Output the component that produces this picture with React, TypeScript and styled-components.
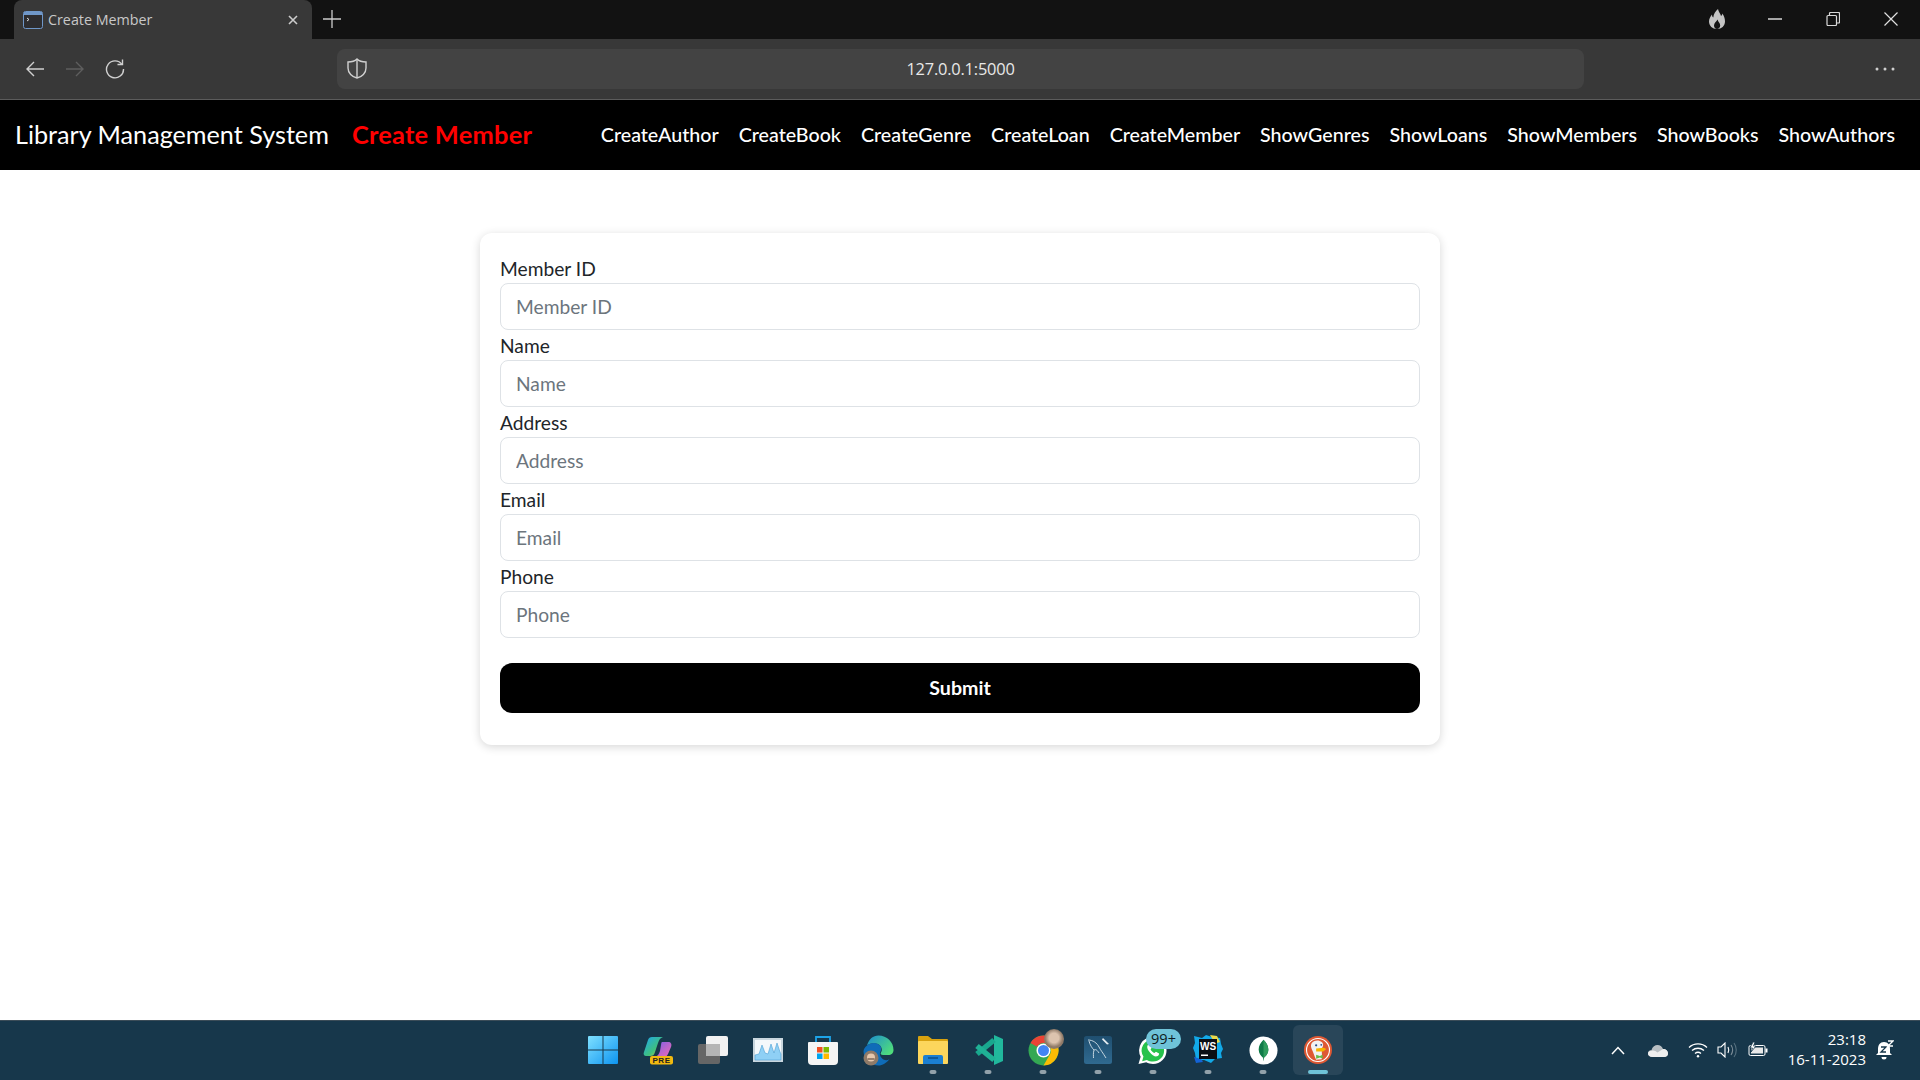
import React from 'react'
import styled, { createGlobalStyle } from 'styled-components'

const GlobalStyle = createGlobalStyle`
	html, body {
		margin: 0;
		padding: 0;
		background: #fff;
	}
	* {
		box-sizing: border-box;
	}
`

const Page = styled.div`
	width: 1920px;
	height: 1080px;
	display: flex;
	flex-direction: column;
	overflow: hidden;
	font-family: 'Lato', 'Liberation Sans', sans-serif;
`

/* browser chrome */
const TabStrip = styled.div`
	height: 39px;
	background: #121212;
	display: flex;
	padding-left: 14px;
`

const Tab = styled.div`
	width: 298px;
	background: #383838;
	border-radius: 8px 8px 0 0;
	display: flex;
	align-items: center;
	padding: 0 13px 0 9px;
	color: #c8c8c8;
	font-family: 'Open Sans', sans-serif;
	font-size: 14.3px;
`

const TabTitle = styled.span`
	flex: 1;
	margin-left: 5px;
`

const NewTab = styled.div`
	width: 40px;
	padding-bottom: 1px;
	display: flex;
	align-items: center;
	justify-content: center;
`

const WindowControls = styled.div`
	margin-left: auto;
	display: flex;
`

const WindowButton = styled.div`
	width: 58px;
	padding-bottom: 1px;
	display: flex;
	align-items: center;
	justify-content: center;
`

const Toolbar = styled.div`
	height: 61px;
	background: #383838;
	border-bottom: 1px solid #5c5c5c;
	display: grid;
	grid-template-columns: 337px 1fr 336px;
	align-items: center;
`

const NavButtons = styled.div`
	display: flex;
	padding-left: 15px;
`

const NavButton = styled.div`
	width: 40px;
	height: 40px;
	display: flex;
	align-items: center;
	justify-content: center;
`

const AddressBar = styled.div`
	height: 40px;
	margin-top: -1px;
	background: #434343;
	border-radius: 8px;
	display: grid;
	grid-template-columns: 1fr auto 1fr;
	align-items: center;
	color: #e8e8e8;
	font-family: 'Open Sans', sans-serif;
	font-size: 16.4px;
	letter-spacing: -0.2px;
`

const ShieldSlot = styled.div`
	display: flex;
	padding-left: 10px;
`

const MoreButton = styled.div`
	display: flex;
	justify-content: flex-end;
	padding-right: 25px;
`

/* site navbar */
const Navbar = styled.nav`
	height: 70px;
	background: #000;
	display: flex;
	align-items: center;
	padding: 0 25px 2px 15px;
`

const Brand = styled.div`
	color: #fff;
	font-size: 25.2px;
	white-space: nowrap;
`

const PageTitle = styled.div`
	color: #f00;
	font-size: 25.4px;
	font-weight: 700;
	letter-spacing: 0.25px;
	margin-left: 23px;
	white-space: nowrap;
`

const NavLinks = styled.div`
	margin-left: auto;
	display: flex;
	gap: 20px;
`

const NavLink = styled.a`
	color: #fff;
	font-size: 19.65px;
	font-weight: 500;
	white-space: nowrap;
`

/* form */
const Main = styled.main`
	flex: 1;
	padding-top: 63px;
	background: #fff;
`

const Card = styled.form`
	width: 960px;
	height: 512px;
	margin: 0 auto;
	padding: 20px 20px 0;
	background: #fff;
	border-radius: 12px;
	box-shadow: 0 2px 10px rgba(0, 0, 0, 0.16);
`

const Label = styled.label`
	display: block;
	height: 30px;
	line-height: 32px;
	color: #212529;
	font-size: 19.2px;
`

const Input = styled.input`
	display: block;
	width: 100%;
	height: 47px;
	padding: 0 15px 1px;
	border: 1px solid #dee2e6;
	border-radius: 8px;
	background: #fff;
	font-family: inherit;
	font-size: 19.2px;
	&::placeholder {
		color: #6c757d;
		opacity: 1;
	}
`

const Submit = styled.button`
	display: block;
	width: 100%;
	height: 50px;
	margin-top: 25px;
	padding: 0 0 1px;
	border: 0;
	border-radius: 12px;
	background: #000;
	color: #fff;
	font-family: inherit;
	font-size: 19.6px;
	font-weight: 700;
`

/* taskbar */
const Taskbar = styled.footer`
	height: 60px;
	padding-bottom: 1px;
	background: #17374b;
	border-top: 1px solid #3b4c58;
	display: grid;
	grid-template-columns: 1fr auto 1fr;
	align-items: center;
`

const TaskIcons = styled.div`
	grid-column: 2;
	display: flex;
	gap: 5px;
	margin-left: 1px;
`

const TaskSlot = styled.div<{ $active?: boolean }>`
	position: relative;
	width: 50px;
	height: 50px;
	display: flex;
	align-items: center;
	justify-content: center;
	border-radius: 6px;
	background: ${p => (p.$active ? '#294659' : 'transparent')};
`

const RunDot = styled.span<{ $active?: boolean }>`
	position: absolute;
	left: 50%;
	bottom: 1px;
	transform: translateX(-50%);
	width: ${p => (p.$active ? '20px' : '7px')};
	height: 4px;
	border-radius: 2px;
	background: ${p => (p.$active ? '#6fc3d8' : '#92a1aa')};
`

const Badge = styled.span`
	position: absolute;
	top: 4px;
	left: 18px;
	width: 35px;
	height: 20px;
	border-radius: 10px;
	background: #6fc3d8;
	color: #0d1a20;
	font-family: 'Open Sans', sans-serif;
	font-size: 14.5px;
	line-height: 20px;
	text-align: center;
`

const MiniAvatar = styled.span`
	position: absolute;
	top: 4px;
	left: 26px;
	width: 20px;
	height: 20px;
	border-radius: 50%;
	background: radial-gradient(circle at 50% 45%, #dcc3ae 0 32%, #8f7a68 60%);
`

const Tray = styled.div`
	display: flex;
	align-items: center;
	justify-content: flex-end;
	padding-right: 18px;
`

const TrayIcon = styled.div<{ $width: number }>`
	width: ${p => p.$width}px;
	display: flex;
	justify-content: center;
`

const Clock = styled.div`
	margin: -2px 2px 0 2px;
	width: 90px;
	text-align: right;
	color: #fff;
	font-family: 'Open Sans', sans-serif;
	font-size: 15px;
	line-height: 20px;
`

/* icons */
const TerminalIcon = () => (
	<svg width="20" height="18" viewBox="0 0 20 18">
		<rect x=".5" y=".5" width="19" height="17" rx="2" fill="#2d2d30" stroke="#6f97c9" />
		<rect x="1" y="1" width="18" height="3" fill="#6f97c9" />
		<path d="M4 7l2 1.500L4 10" stroke="#ddd" fill="none" />
	</svg>
)

const CloseSmall = () => (
	<svg width="12" height="12" viewBox="0 0 12 12">
		<path d="M2 2l8 8M10 2l-8 8" stroke="#ccc" strokeWidth="1.600" />
	</svg>
)

const Plus = () => (
	<svg width="18" height="18" viewBox="0 0 18 18">
		<path d="M9 0v18M0 9h18" stroke="#ccc" strokeWidth="1.300" />
	</svg>
)

const Flame = () => (
	<svg width="16" height="20" viewBox="0 0 16 20">
		<path d="M9 0c.5 3 2.500 4.500 3 7 .8-.5 1.300-1.500 1.300-2.500C15 6.500 16 9.500 16 12.500 16 17 12.500 20 8 20S0 17 0 12.500C0 9.500 1.500 7.500 3 5.500c0 1.500.5 2.500 1.300 3C4.500 5 6.500 2 9 0z" fill="#c4c4c4" />
		<path d="M8.500 10.500C7.500 12.500 5 14 5 16.500 5 18.500 6.500 20 8 20s3.200-1.300 3.200-3.500c0-2.500-2-3.500-2.700-6z" fill="#121212" />
	</svg>
)

const Minimize = () => (
	<svg width="14" height="14" viewBox="0 0 14 14">
		<path d="M0 7h14" stroke="#d8d8d8" strokeWidth="1.500" />
	</svg>
)

const Restore = () => (
	<svg width="14" height="14" viewBox="0 0 14 14" fill="none" stroke="#d8d8d8" strokeWidth="1.200">
		<rect x="1" y="3.500" width="9.500" height="10" rx="1" />
		<path d="M3.500 3.500V1.500a1 1 0 0 1 1-1H12.500a1 1 0 0 1 1 1V10a1 1 0 0 1-1 1h-2" />
	</svg>
)

const CloseWindow = () => (
	<svg width="14" height="14" viewBox="0 0 14 14">
		<path d="M.5.5l13 13M13.500.5l-13 13" stroke="#e0e0e0" strokeWidth="1.200" />
	</svg>
)

const Arrow = ({ flip, color }: { flip?: boolean; color: string }) => (
	<svg width="20" height="18" viewBox="0 0 20 18" style={flip ? { transform: 'scaleX(-1)' } : undefined}>
		<path d="M19 9H2M9 2L2 9l7 7" stroke={color} strokeWidth="1.400" fill="none" />
	</svg>
)

const Reload = () => (
	<svg width="20" height="20" viewBox="0 0 20 20" fill="none" stroke="#d0d0d0" strokeWidth="1.400">
		<path d="M17 5.500A8.500 8.500 0 1 0 18.500 10" />
		<path d="M12.500 5.500H17.500V.5" />
	</svg>
)

const Shield = () => (
	<svg width="20" height="21" viewBox="0 0 20 21" fill="none" stroke="#d0d0d0" strokeWidth="1.400">
		<path d="M10 1c2 2 5 3 9 3v6c0 5-4 9-9 10C5 19 1 15 1 10V4c4 0 7-1 9-3z" />
		<path d="M10 1v19" />
	</svg>
)

const Dots = () => (
	<svg width="20" height="4" viewBox="0 0 20 4" fill="#d0d0d0">
		<circle cx="2" cy="2" r="1.500" />
		<circle cx="10" cy="2" r="1.500" />
		<circle cx="18" cy="2" r="1.500" />
	</svg>
)

const StartIcon = () => (
	<svg width="30" height="30" viewBox="0 0 30 30">
		<defs>
			<linearGradient id="st" x1="0" y1="0" x2="1" y2="1">
				<stop offset="0" stopColor="#7fe0ff" />
				<stop offset="1" stopColor="#0d94f0" />
			</linearGradient>
		</defs>
		<path d="M1 1h13.500v13.500H0V2a1 1 0 0 1 1-1zM15.500 1H29a1 1 0 0 1 1 1v12.500H15.500zM0 15.500h14.500V29H1a1 1 0 0 1-1-1zM15.500 15.500H30V28a1 1 0 0 1-1 1H15.500z" fill="url(#st)" />
	</svg>
)

const CopilotIcon = () => (
	<svg width="30" height="30" viewBox="0 0 30 30" fontFamily="'Liberation Sans', sans-serif">
		<defs>
			<linearGradient id="cp1" x1="0" y1="0" x2="1" y2="1">
				<stop offset="0" stopColor="#1ea6ef" />
				<stop offset=".6" stopColor="#3fc07f" />
				<stop offset="1" stopColor="#d8d23a" />
			</linearGradient>
			<linearGradient id="cp2" x1="0" y1="0" x2="1" y2="1">
				<stop offset="0" stopColor="#7b5fe6" />
				<stop offset="1" stopColor="#f26bb5" />
			</linearGradient>
		</defs>
		<path d="M9 2h11c-3 1-4 3-5 6l-3 9c-1 3-2 4-5 4H3c-2 0-3-2-2-4l4-12c.6-2 2-3 4-3z" fill="url(#cp1)" />
		<path d="M19 7h6c3 0 4 2 3 5l-3 7c-1 2-2 3-4 3h-9c3-1 4-3 5-6l1-6c.3-2 .5-3 1-3z" fill="url(#cp2)" />
		<rect x="7" y="21" width="23" height="8.500" rx="2" fill="#f2b90f" />
		<text x="18.500" y="28" fontSize="8" fontWeight="700" textAnchor="middle" letterSpacing=".6" fill="#222">PRE</text>
	</svg>
)

const TaskViewIcon = () => (
	<svg width="30" height="28" viewBox="0 0 30 28">
		<rect x="8" y="0" width="22" height="20" rx="2" fill="#f2f2f2" />
		<rect x="0" y="8" width="22" height="20" rx="2" fill="#666" />
		<rect x="8" y="8" width="14" height="12" fill="#b5b5b5" />
	</svg>
)

const TaskManagerIcon = () => (
	<svg width="30" height="24" viewBox="0 0 30 24">
		<rect x="0" y="0" width="30" height="24" fill="#c9d6de" />
		<rect x="2" y="2" width="26" height="20" fill="#f4f8fb" />
		<path d="M2 17l4-1 3-9 3 8 3 1 3-10 3 9 3-10 3 9 1 2v6H2z" fill="#8fd0f5" stroke="#4d9fd4" strokeWidth=".6" />
	</svg>
)

const StoreIcon = () => (
	<svg width="30" height="30" viewBox="0 0 30 30">
		<path d="M8 7V2h14v5" fill="none" stroke="#1da4e8" strokeWidth="1.800" />
		<path d="M1 7h28a1 1 0 0 1 1 1v18a4 4 0 0 1-4 4H4a4 4 0 0 1-4-4V8a1 1 0 0 1 1-1z" fill="#f5f5f5" />
		<rect x="9" y="12" width="5.500" height="5.500" fill="#f25022" />
		<rect x="15.500" y="12" width="5.500" height="5.500" fill="#7fba00" />
		<rect x="9" y="18.500" width="5.500" height="5.500" fill="#00a4ef" />
		<rect x="15.500" y="18.500" width="5.500" height="5.500" fill="#ffb900" />
	</svg>
)

const EdgeIcon = () => (
	<svg width="31" height="31" viewBox="0 0 31 31">
		<defs>
			<linearGradient id="ed" x1="0" y1="0" x2="1" y2=".7">
				<stop offset="0" stopColor="#1b8bd0" />
				<stop offset="1" stopColor="#4fdc7c" />
			</linearGradient>
		</defs>
		<path d="M15.500.5C24 .5 30.500 7 30.500 15c0 3-2 5-5.500 5h-5c-2 0-3-1-2-2.500 1.500-2 1-5-1-7-3-3-9-3-13 0C6 4 10 .5 15.500.5z" fill="url(#ed)" />
		<path d="M4 10.500c4-3.500 10-3.500 13 0 1.500 2 1.500 4 .5 6-1.500 3 0 6 3 8 2 1 4 1 6-.5-3 4-7 6.500-11 6.500-7 0-15-7-15-14 0-2.500 1.500-4.500 3.500-6z" fill="#0f6cb8" />
		<circle cx="8" cy="23" r="7.500" fill="#8f7a68" />
		<circle cx="8" cy="22.500" r="4" fill="#e6c8ae" />
		<path d="M4.500 24h7" stroke="#4a3a30" strokeWidth="1" />
	</svg>
)

const FolderIcon = () => (
	<svg width="30" height="28" viewBox="0 0 30 28">
		<path d="M1 0h9l4 3h15a1 1 0 0 1 1 1v4H0V1a1 1 0 0 1 1-1z" fill="#d8a20f" />
		<rect x="0" y="5" width="30" height="23" rx="1" fill="#fcd65c" />
		<path d="M5 28v-7a2 2 0 0 1 2-2h16a2 2 0 0 1 2 2v7z" fill="#1b7fd1" />
		<path d="M10 22h10" stroke="#0c4f8a" strokeWidth="1.500" />
	</svg>
)

const VSCodeIcon = () => (
	<svg width="30" height="30" viewBox="0 0 30 30">
		<path d="M21 0l9 4v22l-9 4z" fill="#21b89c" />
		<path d="M21 5L4 19" stroke="#19a78e" strokeWidth="5.500" fill="none" />
		<path d="M21 25L4 11" stroke="#1fb195" strokeWidth="5.500" fill="none" />
	</svg>
)

const ChromeIcon = () => (
	<svg width="31" height="31" viewBox="0 0 31 31">
		<circle cx="15.500" cy="15.500" r="15" fill="#34a853" />
		<path d="M15.500.5A15 15 0 0 1 28.500 8H15.500a7.500 7.500 0 0 0-6.500 3.800L2.500 8A15 15 0 0 1 15.500.5z" fill="#ea4335" />
		<path d="M28.500 8a15 15 0 0 1-13 22.500l6.500-11.200A7.500 7.500 0 0 0 22 12z" fill="#fbbc05" />
		<circle cx="15.500" cy="15.500" r="7" fill="#fff" />
		<circle cx="15.500" cy="15.500" r="5.500" fill="#4285f4" />
	</svg>
)

const MySqlIcon = () => (
	<svg width="28" height="28" viewBox="0 0 28 28">
		<defs>
			<linearGradient id="ms" x1="0" y1="0" x2="0" y2="1">
				<stop offset="0" stopColor="#1f4f70" />
				<stop offset="1" stopColor="#306a90" />
			</linearGradient>
		</defs>
		<rect width="28" height="28" rx="2.500" fill="url(#ms)" />
		<path d="M4 4c5 0 9 3 11 7 1.500 3 4 6 7 11M5 5c1 4 3 7 5 9-1 3-.5 6-.5 8M10 14c2-1 3 0 5 3" stroke="#d5e2ea" strokeWidth=".9" fill="none" />
		<path d="M19 2l6 6-2 .5-5-5z" fill="#e5edf2" />
	</svg>
)

const WhatsAppIcon = () => (
	<svg width="30" height="29" viewBox="0 0 30 30">
		<path d="M15 1a14 14 0 0 1 0 28c-2.500 0-5-.700-7-1.800L0 29l2.200-7.500A14 14 0 0 1 15 1z" fill="#fff" />
		<path d="M15 3.500a11.500 11.500 0 0 1 0 23c-2.300 0-4.500-.700-6.300-1.800L3.800 26l1.300-4.800A11.500 11.500 0 0 1 15 3.500z" fill="#27c24c" />
		<path d="M10.500 8.500c-2 1.500-2 4 .5 7.500 3 4 6 5.500 8 5 1.500-.5 2.500-2 2.300-3l-3.300-1.800-1.500 1.500c-1.500-.5-3.500-2.500-4-4l1.200-1.500-1.500-3.500c-.7-.5-1.700-.5-2.700.3z" fill="#fff" />
	</svg>
)

const WebStormIcon = () => (
	<svg width="30" height="30" viewBox="0 0 30 30" fontFamily="'Liberation Sans', sans-serif">
		<path d="M1 1l8 2 4-3 6 2 8 1 1 6 2 5-2 4 1 5-7 1-4 4-7-3-8 1-1-8-2-5 2-5z" fill="#12a9e8" />
		<path d="M17 0l7 1 3 6-3 1-4-3z" fill="#e9d94a" />
		<path d="M1 22l2 6 7-1-2-3z" fill="#1463d6" />
		<rect x="6" y="4" width="18" height="20" fill="#0b0f14" />
		<text x="15" y="14.500" fontSize="10" fontWeight="700" textAnchor="middle" fill="#fff">WS</text>
		<rect x="8" y="19.500" width="7" height="1.500" fill="#fff" />
	</svg>
)

const MongoIcon = () => (
	<svg width="29" height="29" viewBox="0 0 30 30">
		<circle cx="15" cy="15" r="14.500" fill="#fff" />
		<path d="M15 4c3 3 5 6 5 10s-2.500 7-4.500 8.500l-.500 3.500-.500-3.500C12.500 21 10 18 10 14s2-7 5-10z" fill="#0f7a48" />
		<path d="M15 4c3 3 5 6 5 10s-2.500 7-4.500 8.500L15 26z" fill="#2f9c5d" />
	</svg>
)

const DuckIcon = () => (
	<svg width="28" height="28" viewBox="0 0 30 30">
		<circle cx="15" cy="15" r="15" fill="#de5833" />
		<circle cx="15" cy="15" r="12.300" fill="none" stroke="#fff" strokeWidth="1.200" />
		<path d="M8 8c2-3.500 8-4.500 11-1.500 2.500 2.500 1.500 5 0 7 0 4 .5 8 0 11.500l-6 .5c-2-4-3-8-4.500-11C7.500 12 7 10 8 8z" fill="#f2f2f2" />
		<path d="M13 13.500l8-1 3 1.500-3.500 2.500-7.500 0z" fill="#f7b500" />
		<path d="M13 20l4 1.500 3-1.500v4l-3-1-4 1.500z" fill="#67bd45" />
		<circle cx="13" cy="10" r="1.200" fill="#2d4f8e" />
		<circle cx="18.500" cy="9.500" r="1" fill="#2d4f8e" />
	</svg>
)

const Chevron = () => (
	<svg width="14" height="9" viewBox="0 0 14 9">
		<path d="M1 8l6-6.500L13 8" stroke="#fff" strokeWidth="1.500" fill="none" />
	</svg>
)

const Cloud = () => (
	<svg width="20" height="13" viewBox="0 0 20 13">
		<path d="M4.500 13C2 13 0 11.500 0 9.500S1.500 6 3.500 6C4.500 2.500 7 1 9.500 1c2.500 0 4.500 1.500 5.500 4 3 0 5 2 5 4.500 0 2-1.500 3.500-4 3.500z" fill="#b9bfc3" />
		<path d="M4.500 13C2 13 0 11.500 0 9.500S1.500 7 3.500 7c2-1 4 0 6 1.500L15 5c3 0 5 2 5 4.500 0 2-1.500 3.500-4 3.500z" fill="#eee" />
	</svg>
)

const Wifi = () => (
	<svg width="20" height="16" viewBox="0 0 20 16" fill="none" stroke="#fff" strokeWidth="1.300">
		<path d="M1 5.500c5-4.800 13-4.800 18 0" />
		<path d="M4 8.500c3.500-3 8.500-3 12 0" />
		<path d="M7 11.500c1.800-1.500 4.200-1.500 6 0" />
		<circle cx="10" cy="14.300" r="1.200" fill="#fff" stroke="none" />
	</svg>
)

const Speaker = () => (
	<svg width="20" height="16" viewBox="0 0 20 16" fill="none" stroke="#fff" strokeWidth="1.100">
		<path d="M1 5h3l4-4v14l-4-4H1z" />
		<path d="M11 5c1 2 1 4 0 6" />
		<path d="M14 3c2 3 2 7 0 10" stroke="#7d8d98" />
		<path d="M17 1c3 4 3 10 0 14" stroke="#56707f" />
	</svg>
)

const Battery = () => (
	<svg width="20" height="16" viewBox="0 0 20 16">
		<rect x="1" y="3.500" width="16" height="10" rx="1.500" fill="none" stroke="#fff" />
		<rect x="3" y="5.500" width="12" height="6" fill="#e8e8e8" />
		<rect x="17.500" y="6.500" width="2" height="4" fill="#fff" />
		<path d="M5 0L2 6h2.500L3 10l5-6H5.500L7 0z" fill="#fff" stroke="#17374b" strokeWidth=".8" />
	</svg>
)

const SnoozeBell = () => (
	<svg width="18" height="20" viewBox="0 0 18 20">
		<path d="M8 2c4 0 6 3 6 7v4l2 2H0l2-2V9c0-4 2-7 6-7z" fill="#fff" />
		<path d="M5.500 17h5a2.500 2.500 0 0 1-5 0z" fill="#fff" />
		<path d="M5 7h5l-5 5h5" stroke="#17374b" strokeWidth="1.300" fill="none" />
		<path d="M12 1h5l-5 5h5" stroke="#fff" strokeWidth="1.300" fill="none" />
	</svg>
)

const links = [
	'CreateAuthor',
	'CreateBook',
	'CreateGenre',
	'CreateLoan',
	'CreateMember',
	'ShowGenres',
	'ShowLoans',
	'ShowMembers',
	'ShowBooks',
	'ShowAuthors',
]

const fields = ['Member ID', 'Name', 'Address', 'Email', 'Phone']

const App = () => {
	return (
		<Page>
			<GlobalStyle />
			<TabStrip>
				<Tab>
					<TerminalIcon />
					<TabTitle>Create Member</TabTitle>
					<CloseSmall />
				</Tab>
				<NewTab>
					<Plus />
				</NewTab>
				<WindowControls>
					<WindowButton>
						<Flame />
					</WindowButton>
					<WindowButton>
						<Minimize />
					</WindowButton>
					<WindowButton>
						<Restore />
					</WindowButton>
					<WindowButton>
						<CloseWindow />
					</WindowButton>
				</WindowControls>
			</TabStrip>
			<Toolbar>
				<NavButtons>
					<NavButton>
						<Arrow color="#d0d0d0" />
					</NavButton>
					<NavButton>
						<Arrow flip color="#5e5e5e" />
					</NavButton>
					<NavButton>
						<Reload />
					</NavButton>
				</NavButtons>
				<AddressBar>
					<ShieldSlot>
						<Shield />
					</ShieldSlot>
					<span>127.0.0.1:5000</span>
				</AddressBar>
				<MoreButton>
					<Dots />
				</MoreButton>
			</Toolbar>
			<Navbar>
				<Brand>Library Management System</Brand>
				<PageTitle>Create Member</PageTitle>
				<NavLinks>
					{links.map(link => (
						<NavLink key={link}>{link}</NavLink>
					))}
				</NavLinks>
			</Navbar>
			<Main>
				<Card>
					{fields.map(field => (
						<div key={field}>
							<Label>{field}</Label>
							<Input placeholder={field} />
						</div>
					))}
					<Submit type="button">Submit</Submit>
				</Card>
			</Main>
			<Taskbar>
				<TaskIcons>
					<TaskSlot>
						<StartIcon />
					</TaskSlot>
					<TaskSlot>
						<CopilotIcon />
					</TaskSlot>
					<TaskSlot>
						<TaskViewIcon />
					</TaskSlot>
					<TaskSlot>
						<TaskManagerIcon />
					</TaskSlot>
					<TaskSlot>
						<StoreIcon />
					</TaskSlot>
					<TaskSlot>
						<EdgeIcon />
					</TaskSlot>
					<TaskSlot>
						<FolderIcon />
						<RunDot />
					</TaskSlot>
					<TaskSlot>
						<VSCodeIcon />
						<RunDot />
					</TaskSlot>
					<TaskSlot>
						<ChromeIcon />
						<MiniAvatar />
						<RunDot />
					</TaskSlot>
					<TaskSlot>
						<MySqlIcon />
						<RunDot />
					</TaskSlot>
					<TaskSlot>
						<WhatsAppIcon />
						<Badge>99+</Badge>
						<RunDot />
					</TaskSlot>
					<TaskSlot>
						<WebStormIcon />
						<RunDot />
					</TaskSlot>
					<TaskSlot>
						<MongoIcon />
						<RunDot />
					</TaskSlot>
					<TaskSlot $active>
						<DuckIcon />
						<RunDot $active />
					</TaskSlot>
				</TaskIcons>
				<Tray>
					<TrayIcon $width={28}>
						<Chevron />
					</TrayIcon>
					<TrayIcon $width={52}>
						<Cloud />
					</TrayIcon>
					<TrayIcon $width={28}>
						<Wifi />
					</TrayIcon>
					<TrayIcon $width={30}>
						<Speaker />
					</TrayIcon>
					<TrayIcon $width={32}>
						<Battery />
					</TrayIcon>
					<Clock>
						23:18
						<br />
						16-11-2023
					</Clock>
					<TrayIcon $width={34}>
						<SnoozeBell />
					</TrayIcon>
				</Tray>
			</Taskbar>
		</Page>
	)
}

export default App
